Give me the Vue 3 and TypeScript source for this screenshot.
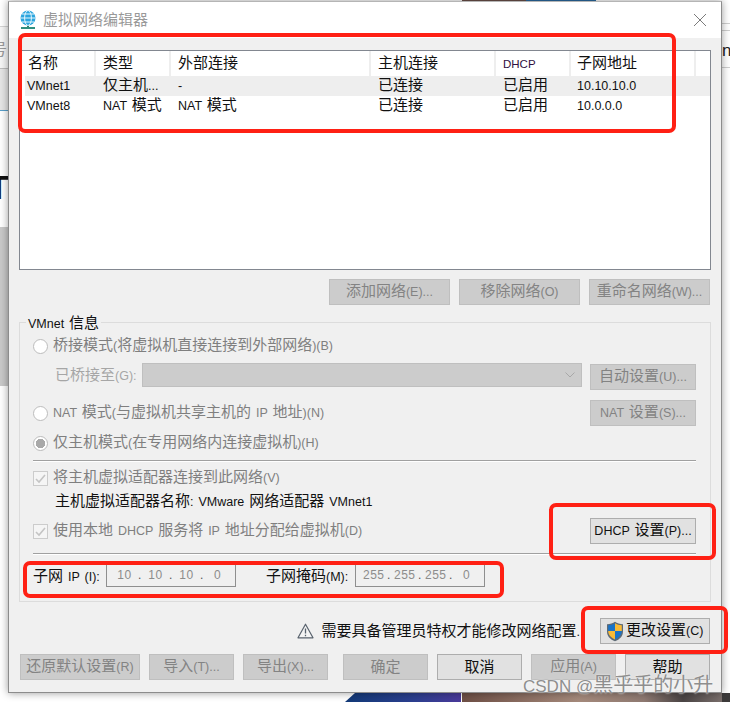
<script setup lang="ts">
import { h } from 'vue';

interface NetRow {
	name: string;
	type: string;
	external: string;
	host: string;
	dhcp: string;
	subnet: string;
}

// latin runs are set smaller than the cjk text, as in the real dialog
const T = (props: { t: string }) =>
	props.t
		.split(/([\x20-\x7e]+)/)
		.filter(Boolean)
		.map((s) => (/^[\x20-\x7e]/.test(s) ? h('span', { class: 'la' }, s) : s));

const columns = ['名称', '类型', '外部连接', '主机连接', 'DHCP', '子网地址'];

const rows: NetRow[] = [
	{ name: 'VMnet1', type: '仅主机...', external: '-', host: '已连接', dhcp: '已启用', subnet: '10.10.10.0' },
	{ name: 'VMnet8', type: 'NAT 模式', external: 'NAT 模式', host: '已连接', dhcp: '已启用', subnet: '10.0.0.0' },
];

const subnetIp = ['10', '10', '10', '0'];
const subnetMask = ['255', '255', '255', '0'];
</script>

<template>
	<div class="desktop">
		<div class="bg bg-left-a"></div>
		<div class="bg bg-left-b"></div>
		<div class="bg bg-left-c"></div>
		<div class="bg bg-t">T</div>
		<div class="bg bg-glyph">号</div>
		<div class="bg bg-right-line1"></div>
		<div class="bg bg-right-line2"></div>
		<div class="bg bg-n">n</div>
		<div class="bg bg-top-a"></div>
		<div class="bg bg-top-b"></div>
		<div class="bg bg-blue"></div>
		<div class="bg bg-brown"></div>
		<div class="bg bg-dark"></div>

		<div class="dialog">
			<div class="titlebar">
				<svg class="globe" width="18" height="20" viewBox="0 0 18 20">
					<path d="M9 14v3" stroke="#2f7f6f" stroke-width="2" />
					<path d="M2 18h14" stroke="#2f8f7f" stroke-width="2" />
					<circle cx="9" cy="8" r="7.5" fill="#2ba5de" />
					<path d="M1.5 8h15M3 4h12M3 12h12" stroke="#e6f6fd" stroke-width="1" fill="none" />
					<ellipse cx="9" cy="8" rx="3.4" ry="7.5" stroke="#e6f6fd" stroke-width="1" fill="none" />
				</svg>
				<span class="title">虚拟网络编辑器</span>
				<svg class="close" width="14" height="14" viewBox="0 0 14 14">
					<path d="M1 1l12 12M13 1L1 13" stroke="#7b7b7b" stroke-width="1" fill="none" />
				</svg>
			</div>

			<div class="body">
				<div class="table">
					<div class="tr head">
						<div v-for="c in columns" :key="c" class="td">
							<span :class="{ 'dhcp-head': c === 'DHCP' }"><T :t="c" /></span>
						</div>
					</div>
					<div v-for="(r, i) in rows" :key="r.name" class="tr" :class="{ shaded: i === 0 }">
						<div class="td"><T :t="r.name" /></div>
						<div class="td"><T :t="r.type" /></div>
						<div class="td"><T :t="r.external" /></div>
						<div class="td"><T :t="r.host" /></div>
						<div class="td"><T :t="r.dhcp" /></div>
						<div class="td ip"><T :t="r.subnet" /></div>
					</div>
				</div>

				<div class="net-actions">
					<button class="btn off wide"><T t="添加网络(E)..." /></button>
					<button class="btn off wide"><T t="移除网络(O)" /></button>
					<button class="btn off wide"><T t="重命名网络(W)..." /></button>
				</div>

				<div class="group">
					<div class="legend"><T t="VMnet 信息" /></div>

					<div class="row opt bridge">
						<span class="radio"></span>
						<span class="muted"><T t="桥接模式(将虚拟机直接连接到外部网络)(B)" /></span>
					</div>
					<div class="row bridged">
						<span class="bridged-label muted-light"><T t="已桥接至(G):" /></span>
						<div class="select">
							<svg width="10" height="6" viewBox="0 0 10 6">
								<path d="M.5.5L5 5 9.5.5" stroke="#a8a8a8" fill="none" />
							</svg>
						</div>
						<button class="btn off side auto"><T t="自动设置(U)..." /></button>
					</div>
					<div class="row spread nat">
						<div class="row opt-inner">
							<span class="radio"></span>
							<span class="muted"><T t="NAT 模式(与虚拟机共享主机的 IP 地址)(N)" /></span>
						</div>
						<button class="btn off side"><T t="NAT 设置(S)..." /></button>
					</div>
					<div class="row opt host-only">
						<span class="radio checked"></span>
						<span class="muted"><T t="仅主机模式(在专用网络内连接虚拟机)(H)" /></span>
					</div>

					<div class="rule"></div>

					<div class="row opt connect">
						<span class="check">
							<svg width="11" height="11" viewBox="0 0 11 11">
								<path d="M1 6l3 3 6-7" stroke="#c4c4c4" stroke-width="1.6" fill="none" />
							</svg>
						</span>
						<span class="muted"><T t="将主机虚拟适配器连接到此网络(V)" /></span>
					</div>
					<div class="adapter"><T t="主机虚拟适配器名称: VMware 网络适配器 VMnet1" /></div>
					<div class="row spread dhcp">
						<div class="row opt-inner">
							<span class="check">
								<svg width="11" height="11" viewBox="0 0 11 11">
									<path d="M1 6l3 3 6-7" stroke="#c4c4c4" stroke-width="1.6" fill="none" />
								</svg>
							</span>
							<span class="muted"><T t="使用本地 DHCP 服务将 IP 地址分配给虚拟机(D)" /></span>
						</div>
						<button class="btn side"><T t="DHCP 设置(P)..." /></button>
					</div>

					<div class="rule rule-low"></div>

					<div class="row subnet">
						<span class="ip-label"><T t="子网 IP (I):" /></span>
						<div class="ip-box">
							<template v-for="(o, i) in subnetIp" :key="i">
								<span class="octet">{{ o }}</span>
								<span v-if="i < 3" class="dot">.</span>
							</template>
						</div>
						<span class="mask-label"><T t="子网掩码(M):" /></span>
						<div class="ip-box">
							<template v-for="(o, i) in subnetMask" :key="i">
								<span class="octet">{{ o }}</span>
								<span v-if="i < 3" class="dot">.</span>
							</template>
						</div>
					</div>
				</div>

				<div class="row notice">
					<svg class="warn" width="17" height="16" viewBox="0 0 17 16">
						<path d="M8.5 1.2L16 14.8H1z" stroke="#59636e" stroke-width="1.2" fill="#f4f4f4" stroke-linejoin="round" />
						<path d="M8.5 5.5v5M8.5 11.8v1.4" stroke="#59636e" stroke-width="1.3" />
					</svg>
					<span class="notice-text"><T t="需要具备管理员特权才能修改网络配置." /></span>
					<button class="btn change">
						<svg class="shield" width="18" height="21" viewBox="0 0 18 21">
							<path d="M9 .8C7 2.4 4 3.2 1 3.2v7.3c0 4.6 3.2 8 8 9.8 4.8-1.8 8-5.2 8-9.8V3.2C14 3.2 11 2.4 9 .8z" fill="#5e6a75" />
							<path d="M9 2.2C7.3 3.4 4.7 4.1 2.2 4.2v5.9H9z" fill="#1a73c8" />
							<path d="M9 2.2c1.7 1.2 4.3 1.9 6.8 2v5.9H9z" fill="#f9ba35" />
							<path d="M2.2 10.1c.1 4 2.8 6.7 6.8 8.5v-8.5z" fill="#f9ba35" />
							<path d="M15.8 10.1c-.1 4-2.8 6.7-6.8 8.5v-8.5z" fill="#1a73c8" />
						</svg>
						<span class="change-label"><T t="更改设置(C)" /></span>
					</button>
				</div>

				<div class="row footer">
					<button class="btn off restore"><T t="还原默认设置(R)" /></button>
					<button class="btn off foot"><T t="导入(T)..." /></button>
					<button class="btn off foot sep"><T t="导出(X)..." /></button>
					<button class="btn off foot"><T t="确定" /></button>
					<button class="btn foot"><T t="取消" /></button>
					<button class="btn off foot"><T t="应用(A)" /></button>
					<button class="btn foot"><T t="帮助" /></button>
				</div>
			</div>
		</div>

		<div class="mark mark-table"></div>
		<div class="mark mark-dhcp"></div>
		<div class="mark mark-subnet"></div>
		<div class="mark mark-change"></div>

		<div class="watermark"><span class="wm-la">CSDN @</span>黑乎乎的小升</div>
	</div>
</template>

<style scoped>
.desktop {
	position: relative;
	width: 730px;
	height: 702px;
	overflow: hidden;
	background: #fff;
	font-family: "Noto Sans CJK SC", "Liberation Sans", sans-serif;
	font-size: 15px;
	color: #111;
}

.bg {
	position: absolute;
}
.bg-left-a {
	left: 0;
	top: 26px;
	width: 9px;
	height: 42px;
	background: #f6f6f6;
	border-top: 1px solid #d4d4d4;
}
.bg-left-b {
	left: 0;
	top: 68px;
	width: 9px;
	height: 41px;
	background: #e6e6e6;
	border-top: 1px solid #bdbdbd;
	border-bottom: 1px solid #5a9fc9;
}
.bg-left-c {
	left: 0;
	top: 227px;
	width: 9px;
	height: 159px;
	background: #c9c9c9;
}
.bg-t {
	left: -12px;
	top: 168px;
	width: 20px;
	font: bold 34px "Liberation Sans", sans-serif;
	color: #111;
}
.bg-glyph {
	left: -9px;
	top: 36px;
	font-size: 16px;
	color: #9a9a9a;
}
.bg-right-line1 {
	left: 722px;
	top: 23px;
	width: 8px;
	height: 6px;
	border-top: 1px solid #cfcfcf;
	border-bottom: 1px solid #cfcfcf;
}
.bg-right-line2 {
	left: 722px;
	top: 67px;
	width: 8px;
	height: 1px;
	background: #cfcfcf;
}
.bg-n {
	left: 722px;
	top: 41px;
	font: 17px "Liberation Sans", sans-serif;
	color: #222;
}
.bg-top-a {
	left: 462px;
	top: 0;
	width: 64px;
	height: 1px;
	background: #6b5048;
}
.bg-top-b {
	left: 526px;
	top: 0;
	width: 70px;
	height: 1px;
	background: #2a6aa0;
}
.bg-blue {
	left: 345px;
	top: 693px;
	width: 116px;
	height: 9px;
	background: linear-gradient(90deg, #123a78, #2c3f8f 60%, #4a3a9a);
	clip-path: polygon(10px 0, 100% 0, 100% 100%, 0 100%);
}
.bg-brown {
	left: 462px;
	top: 693px;
	width: 260px;
	height: 9px;
	background: linear-gradient(90deg, #6e4f45, #a58a7c 45%, #8f7a72 70%, #4a4444 85%, #7a6f6c);
}
.bg-dark {
	left: 722px;
	top: 693px;
	width: 8px;
	height: 9px;
	background: #3c3a3a;
}

.dialog {
	position: absolute;
	left: 8px;
	top: 1px;
	width: 714px;
	height: 692px;
	box-sizing: border-box;
	background: #f0f0f0;
	border: 1px solid #8c8c8c;
	border-top-color: #b5b5b5;
	box-shadow: 0 0 8px rgba(0, 0, 0, 0.4);
}

.titlebar {
	display: flex;
	align-items: center;
	height: 36px;
	padding: 0 14px 0 10px;
	background: #fff;
}
.globe {
	margin-right: 6px;
}
.title {
	margin-bottom: 3px;
	color: #999;
	white-space: nowrap;
}
.close {
	margin-left: auto;
}

.body {
	padding: 0 10px;
}

.row {
	display: flex;
	align-items: center;
}
.spread {
	justify-content: space-between;
}

.table {
	box-sizing: border-box;
	height: 220px;
	margin-top: 12px;
	padding-left: 5px;
	background: #fff;
	border: 1px solid #828790;
}
.tr {
	display: grid;
	grid-template-columns: 71px 75px 200px 125px 75px 125px;
	height: 20px;
	line-height: 16px;
}
.head {
	height: 25px;
	line-height: 22px;
}
.head .td {
	border-right: 2px solid #eeeeee;
	box-sizing: border-box;
}
.shaded {
	background: #eeeeee;
}
.td {
	padding-left: 7px;
	white-space: nowrap;
}
.td:first-child {
	padding-left: 2px;
}
.head .td:first-child {
	padding-left: 3px;
}
.td:last-child {
	padding-left: 6px;
}
.dhcp-head :deep(.la) {
	font-size: 11.5px;
	color: #301040;
}

.net-actions {
	display: flex;
	justify-content: flex-end;
	gap: 9px;
	margin: 9px 1px 0 0;
}

.btn {
	box-sizing: border-box;
	height: 26px;
	padding: 0 0 3px;
	background: #e1e1e1;
	border: 1px solid #adadad;
	font: inherit;
	line-height: 20px;
	color: #111;
	white-space: nowrap;
}
.off {
	background: #cccccc;
	border-color: #bfbfbf;
	color: #838383;
}
.wide {
	width: 121px;
}
.side {
	width: 106px;
	flex: none;
}

.group {
	box-sizing: border-box;
	height: 280px;
	margin-top: 17px;
	padding: 0 14px 0 13px;
	border: 1px solid #dcdcdc;
}
.legend {
	width: fit-content;
	height: 20px;
	margin: -11px 0 0 -7px;
	padding: 0 2px;
	line-height: 20px;
	background: #f0f0f0;
}

.muted {
	margin-bottom: 3px;
	line-height: 20px;
	color: #7f7f7f;
	white-space: nowrap;
}
.muted-light {
	color: #a6a6a6;
	white-space: nowrap;
}

.radio {
	flex: none;
	box-sizing: border-box;
	width: 15px;
	height: 15px;
	margin-right: 5px;
	border: 1px solid #bcbcbc;
	border-radius: 50%;
	background: #fff;
}
.checked {
	background: radial-gradient(circle, #a9a9a9 0 4.5px, #fff 5px);
}
.check {
	flex: none;
	display: flex;
	align-items: center;
	justify-content: center;
	box-sizing: border-box;
	width: 15px;
	height: 15px;
	margin-right: 5px;
	border: 1px solid #cccccc;
	background: #f5f5f5;
}

.bridge {
	height: 24px;
	margin-top: 2px;
}
.bridged {
	align-items: flex-start;
	height: 27px;
	margin-top: 5px;
}
.bridged-label {
	width: 109px;
	flex: none;
	box-sizing: border-box;
	padding-left: 22px;
	line-height: 22px;
}
.select {
	display: flex;
	align-items: center;
	justify-content: flex-end;
	flex: none;
	box-sizing: border-box;
	width: 440px;
	height: 24px;
	padding-right: 6px;
	background: #cccccc;
	border: 1px solid #bfbfbf;
}
.auto {
	margin: 1px 0 0 8px;
}
.nat {
	height: 26px;
	margin-top: 10px;
}
.host-only {
	height: 24px;
	margin-top: 5px;
}
.rule {
	height: 1px;
	margin-top: 5px;
	background: #a0a0a0;
	border-bottom: 1px solid #fff;
}
.rule-low {
	margin-top: 9px;
}
.connect {
	height: 24px;
	margin-top: 4px;
}
.adapter {
	height: 22px;
	padding-left: 22px;
	line-height: 20px;
	white-space: nowrap;
}
.dhcp {
	height: 26px;
	margin-top: 6px;
}

.subnet {
	margin-top: 8px;
}
.ip-label {
	width: 73px;
	flex: none;
	margin-bottom: 2px;
	white-space: nowrap;
}
.mask-label {
	width: 89px;
	flex: none;
	margin: 0 0 2px 30px;
	white-space: nowrap;
}
.ip-box {
	display: flex;
	align-items: center;
	box-sizing: border-box;
	width: 130px;
	height: 24px;
	padding-left: 7px;
	border: 1px solid #8f8f8f;
	border-top-color: #d0d0d0;
	background: #f0f0f0;
	font: 12px "Liberation Sans", sans-serif;
	letter-spacing: 0.5px;
	color: #8c8c8c;
}
.octet {
	width: 21px;
	text-align: center;
}
.dot {
	width: 10px;
	text-align: center;
	color: #555;
}

.notice {
	justify-content: flex-end;
	margin: 16px 1px 0 0;
}
.warn {
	margin-right: 8px;
}
.notice-text {
	margin: 0 20px 3px 0;
	white-space: nowrap;
}
.change {
	display: flex;
	align-items: center;
	width: 110px;
	padding: 0 0 0 5px;
	line-height: 20px;
}
.change-label {
	margin-bottom: 2px;
}
.shield {
	flex: none;
	margin-right: 2px;
}

.footer {
	gap: 9px;
	margin: 10px 1px 0;
}
.restore {
	width: 120px;
}
.foot {
	width: 85px;
}
.sep {
	margin-right: 6px;
}

.mark {
	position: absolute;
	box-sizing: border-box;
	border: 4px solid #ff2014;
	border-radius: 7px;
}
.mark-table {
	left: 18px;
	top: 33px;
	width: 658px;
	height: 100px;
}
.mark-dhcp {
	left: 549px;
	top: 503px;
	width: 167px;
	height: 57px;
}
.mark-subnet {
	left: 23px;
	top: 561px;
	width: 481px;
	height: 37px;
}
.mark-change {
	left: 581px;
	top: 606px;
	width: 147px;
	height: 48px;
}

.watermark {
	position: absolute;
	left: 523px;
	top: 670px;
	font-size: 20px;
	line-height: 27px;
	color: #8e8e8e;
	white-space: nowrap;
	text-shadow: 0 0 2px rgba(255, 255, 255, 0.8);
}
.wm-la {
	font: 17px "Liberation Sans", sans-serif;
}
</style>

<style>
.la {
	font-family: "Liberation Sans", sans-serif;
	font-size: 12.5px;
	word-spacing: 1.5px;
}
</style>
